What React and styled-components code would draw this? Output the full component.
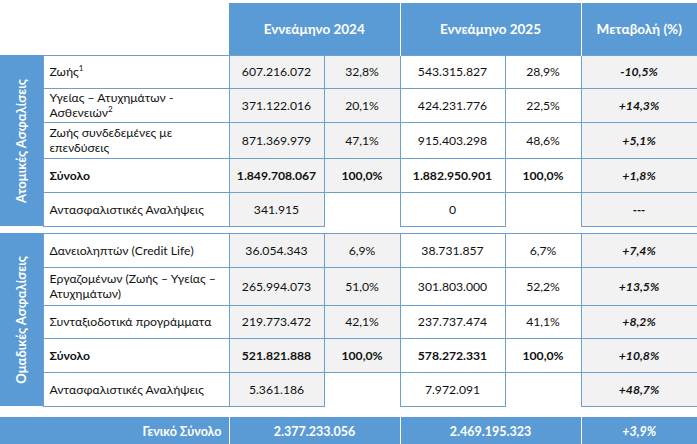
import React from "react";
import styled, { createGlobalStyle } from "styled-components";

const BLUE = "#5b9bd5";
const LINE = "#6d9fd2";
const GREY = "#f2f2f2";

const GlobalStyle = createGlobalStyle`
    html, body {
        margin: 0;
        padding: 0;
        background: #ffffff;
    }
    body {
        font-family: "Lato", "Open Sans", "Noto Sans", sans-serif;
        color: #111111;
    }
`;

const Page = styled.div`
    width: 697px;
    height: 444px;
    padding-top: 3px;
    box-sizing: border-box;
    overflow: hidden;
`;

const Table = styled.table`
    width: 697px;
    table-layout: fixed;
    border-collapse: collapse;
    font-size: 12.2px;
`;

const Row = styled.tr`
    height: ${(p) => p.$h}px;
`;

const Blank = styled.td`
    padding: 0;
    border: none;
    background: #ffffff;
`;

const Head = styled.td`
    background: ${BLUE};
    color: #ffffff;
    font-weight: 700;
    font-size: 13.5px;
    text-align: center;
    padding: 0;
    border: none;
    border-left: ${(p) => (p.$sep ? "1px solid #ffffff" : "none")};
`;

const GroupCell = styled.td`
    background: ${BLUE};
    padding: 0;
    border: none;
    text-align: center;
    vertical-align: middle;
`;

const Vertical = styled.div`
    writing-mode: vertical-rl;
    transform: rotate(180deg);
    margin: 0 auto;
    color: #ffffff;
    font-weight: 700;
    font-size: 13px;
    white-space: nowrap;
`;

const Cell = styled.td`
    border: 1px solid ${LINE};
    padding: 0 6px;
    vertical-align: middle;
    line-height: 15px;
    white-space: nowrap;
    overflow: hidden;
`;

const Label = styled(Cell)`
    background: #ffffff;
    font-weight: ${(p) => (p.$bold ? 700 : 400)};
    text-align: left;
`;

const Value = styled(Cell)`
    background: ${(p) => (p.$grey ? GREY : "#ffffff")};
    font-weight: ${(p) => (p.$bold ? 700 : 400)};
    text-align: center;
    padding: 0 2px;
`;

const Change = styled(Cell)`
    background: ${GREY};
    font-weight: 700;
    font-style: italic;
    text-align: center;
`;

const Sup = styled.sup`
    font-size: 8px;
    line-height: 0;
    vertical-align: 5px;
`;

const Foot = styled.td`
    background: ${BLUE};
    color: #ffffff;
    font-weight: 700;
    font-size: 12.5px;
    font-style: ${(p) => (p.$italic ? "italic" : "normal")};
    text-align: ${(p) => (p.$right ? "right" : "center")};
    padding: 0 ${(p) => (p.$right ? "7px" : "0")} 0 0;
    border: none;
    border-left: ${(p) => (p.$sep ? "1px solid #ffffff" : "none")};
`;

const groups = [
    {
        title: "Ατομικές Ασφαλίσεις",
        rows: [
            { label: <>Ζωής<Sup>1</Sup></>, a: "607.216.072", ap: "32,8%", b: "543.315.827", bp: "28,9%", ch: "-10,5%", h: 33 },
            { label: <>Υγείας – Ατυχημάτων -<br />Ασθενειών<Sup>2</Sup></>, a: "371.122.016", ap: "20,1%", b: "424.231.776", bp: "22,5%", ch: "+14,3%", h: 34 },
            { label: <>Ζωής συνδεδεμένες με<br />επενδύσεις</>, a: "871.369.979", ap: "47,1%", b: "915.403.298", bp: "48,6%", ch: "+5,1%", h: 36 },
            { label: "Σύνολο", a: "1.849.708.067", ap: "100,0%", b: "1.882.950.901", bp: "100,0%", ch: "+1,8%", h: 34, total: true },
            { label: "Αντασφαλιστικές Αναλήψεις", a: "341.915", ap: null, b: "0", bp: null, ch: "---", h: 34 },
        ],
    },
    {
        title: "Ομαδικές Ασφαλίσεις",
        rows: [
            { label: "Δανειοληπτών (Credit Life)", a: "36.054.343", ap: "6,9%", b: "38.731.857", bp: "6,7%", ch: "+7,4%", h: 34 },
            { label: <>Εργαζομένων (Ζωής – Υγείας –<br />Ατυχημάτων)</>, a: "265.994.073", ap: "51,0%", b: "301.803.000", bp: "52,2%", ch: "+13,5%", h: 38 },
            { label: "Συνταξιοδοτικά προγράμματα", a: "219.773.472", ap: "42,1%", b: "237.737.474", bp: "41,1%", ch: "+8,2%", h: 33 },
            { label: "Σύνολο", a: "521.821.888", ap: "100,0%", b: "578.272.331", bp: "100,0%", ch: "+10,8%", h: 34, total: true },
            { label: "Αντασφαλιστικές Αναλήψεις", a: "5.361.186", ap: null, b: "7.972.091", bp: null, ch: "+48,7%", h: 34 },
        ],
    },
];

const App = () => {
    return (
        <>
            <GlobalStyle />
            <Page>
                <Table>
                    <colgroup>
                        <col style={{ width: 43 }} />
                        <col style={{ width: 186 }} />
                        <col style={{ width: 95 }} />
                        <col style={{ width: 76 }} />
                        <col style={{ width: 105 }} />
                        <col style={{ width: 76 }} />
                        <col style={{ width: 116 }} />
                    </colgroup>
                    <tbody>
                        <Row $h={52}>
                            <Blank colSpan={2} />
                            <Head colSpan={2}>Εννεάμηνο 2024</Head>
                            <Head colSpan={2} $sep>Εννεάμηνο 2025</Head>
                            <Head $sep>Μεταβολή (%)</Head>
                        </Row>
                        {groups.map((group, gi) => (
                            <React.Fragment key={group.title}>
                                {gi > 0 && (
                                    <Row $h={7}>
                                        <Blank colSpan={7} />
                                    </Row>
                                )}
                                {group.rows.map((row, ri) => (
                                    <Row key={ri} $h={row.h}>
                                        {ri === 0 && (
                                            <GroupCell rowSpan={group.rows.length}>
                                                <Vertical>{group.title}</Vertical>
                                            </GroupCell>
                                        )}
                                        <Label $bold={row.total}>{row.label}</Label>
                                        <Value $grey $bold={row.total}>{row.a}</Value>
                                        {row.ap ? (
                                            <Value $grey $bold={row.total}>{row.ap}</Value>
                                        ) : (
                                            <Blank />
                                        )}
                                        <Value $bold={row.total}>{row.b}</Value>
                                        {row.bp ? (
                                            <Value $bold={row.total}>{row.bp}</Value>
                                        ) : (
                                            <Blank />
                                        )}
                                        <Change>{row.ch}</Change>
                                    </Row>
                                ))}
                            </React.Fragment>
                        ))}
                        <Row $h={11}>
                            <Blank colSpan={7} />
                        </Row>
                        <Row $h={28}>
                            <Foot colSpan={2} $right>Γενικό Σύνολο</Foot>
                            <Foot colSpan={2} $sep>2.377.233.056</Foot>
                            <Foot colSpan={2} $sep>2.469.195.323</Foot>
                            <Foot $sep $italic>+3,9%</Foot>
                        </Row>
                    </tbody>
                </Table>
            </Page>
        </>
    );
};

export default App;
